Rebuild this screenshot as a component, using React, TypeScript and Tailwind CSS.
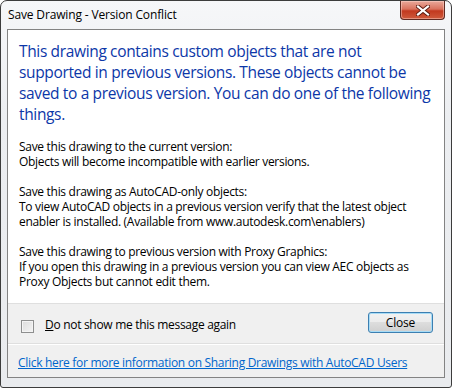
import React from "react";

const font = { fontFamily: '"Segoe UI", "Open Sans", "Noto Sans", sans-serif' };

const CloseGlyph = () => (
  <svg width="14" height="11" viewBox="0 0 14 11">
    <path
      d="M2 1.5 L12 9.5 M12 1.5 L2 9.5"
      stroke="#5a1a10"
      strokeWidth="4"
      strokeLinecap="square"
    />
    <path
      d="M2 1.5 L12 9.5 M12 1.5 L2 9.5"
      stroke="#ffffff"
      strokeWidth="2.2"
      strokeLinecap="square"
    />
  </svg>
);

const App = () => {
  return (
    <div className="w-[452px] h-[388px] bg-white">
      <div
        className="relative flex h-[388px] w-[452px] flex-col rounded-t-[7px] rounded-b-[3px] border border-[#3c3c3c] bg-[linear-gradient(180deg,#f6f7f9_0%,#eceef1_30%,#e9ebee_100%)]"
        style={font}
      >
        {/* title bar */}
        <div className="flex h-[28px] items-start justify-between">
          <span className="pl-[7px] pt-[6px] text-[12px] leading-[16px] tracking-[-0.15px] text-black">
            Save Drawing - Version Conflict
          </span>
          <button className="mr-[6px] flex h-[19px] w-[45px] items-center justify-center rounded-b-[4px] border border-t-0 border-[#5e2a22] bg-[linear-gradient(180deg,#e9a99b_0%,#d9725e_45%,#c2391f_55%,#cf5a3c_100%)] shadow-[inset_0_0_0_1px_rgba(255,220,210,0.45)]">
            <CloseGlyph />
          </button>
        </div>

        {/* client */}
        <div className="mx-[6px] flex flex-col border border-[#838383] bg-[#f0f0f0]">
          <div className="flex flex-col bg-white px-[11px] pt-[11px] pb-[14px]">
            <p className="whitespace-nowrap text-[15.5px] leading-[21px] tracking-[-0.35px] text-[#0c37a8]">
              This drawing contains custom objects that are not
              <br />
              supported in previous versions. These objects cannot be
              <br />
              saved to a previous version. You can do one of the following
              <br />
              things.
            </p>
            <div className="mt-[14px] whitespace-nowrap text-[12px] leading-[15px] tracking-[-0.3px] text-black">
              <p>
                Save this drawing to the current version:
                <br />
                Objects will become incompatible with earlier versions.
              </p>
              <p className="mt-[15px]">
                Save this drawing as AutoCAD-only objects:
                <br />
                To view AutoCAD objects in a previous version verify that the latest object
                <br />
                enabler is installed. (Available from www.autodesk.com\enablers)
              </p>
              <p className="mt-[15px]">
                Save this drawing to previous version with Proxy Graphics:
                <br />
                If you open this drawing in a previous version you can view AEC objects as
                <br />
                Proxy Objects but cannot edit them.
              </p>
            </div>
          </div>

          <div className="h-px bg-[#dfdfdf]" />

          <div className="flex h-[39px] items-center justify-between pl-[13px] pr-[11px]">
            <label className="mt-[3px] flex items-center gap-[11px] whitespace-nowrap text-[12px] tracking-[-0.3px] text-black">
              <span className="mt-[2px] block h-[13px] w-[13px] border border-[#8e8f8f] bg-[linear-gradient(135deg,#dcdcdc_0%,#f4f4f4_100%)] shadow-[inset_0_0_0_1px_#f4f4f4]" />
              <span>
                <span className="underline">D</span>o not show me this message again
              </span>
            </label>
            <button className="-mt-[2px] h-[21px] w-[65px] rounded-[3px] border border-[#3c7fb1] bg-[linear-gradient(180deg,#f2f2f2_0%,#ebebeb_50%,#dddddd_50%,#cfcfcf_100%)] text-[12px] leading-[17px] tracking-[-0.2px] text-black shadow-[inset_0_0_0_1px_#a8dcf6]">
              Close
            </button>
          </div>

          <div className="h-px bg-[#dfdfdf]" />
          <div className="h-px bg-white" />

          <div className="flex h-[32px] items-center pl-[10px]">
            <a className="mt-[2px] whitespace-nowrap text-[12px] leading-[15px] tracking-[-0.3px] text-[#0066cc] underline" href="#">
              Click here for more information on Sharing Drawings with AutoCAD Users
            </a>
          </div>
        </div>
      </div>
    </div>
  );
};

export default App;
